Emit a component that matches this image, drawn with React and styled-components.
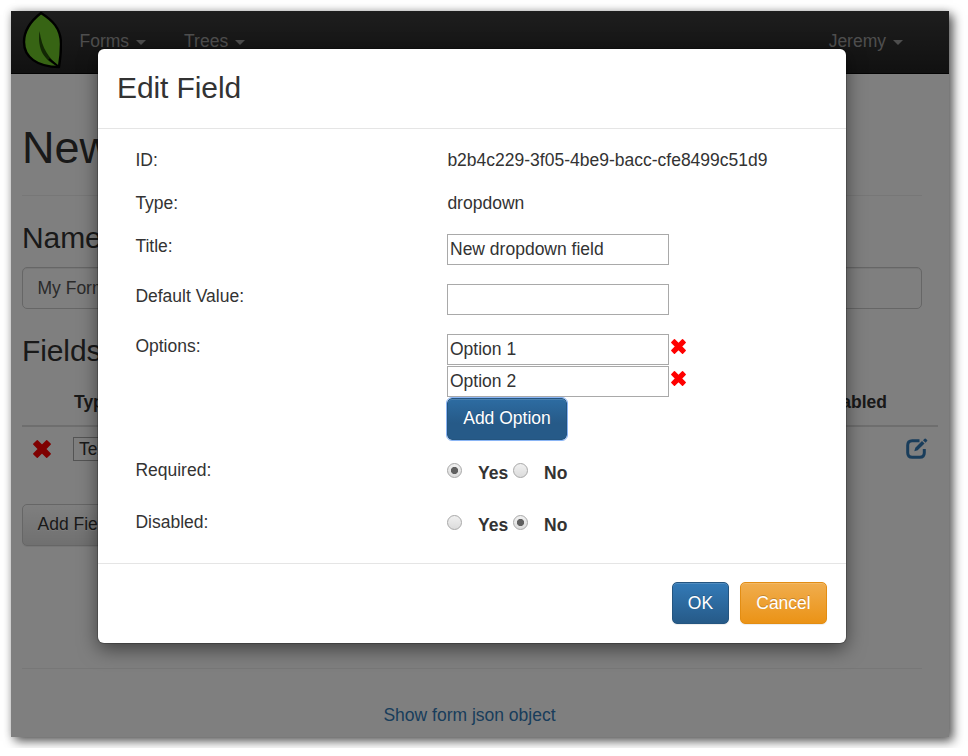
import React from 'react';
import styled, { createGlobalStyle, css } from 'styled-components';

const GlobalStyle = createGlobalStyle`
  * { box-sizing: border-box; }
  body {
    margin: 0;
    background: #fff;
    color: #333;
    font: 17.5px/25px "Liberation Sans", Arial, sans-serif;
    overflow: hidden;
  }
  h1, h3 { font-weight: 400; line-height: 1.1; margin: 0; }
  input, button { font: inherit; color: inherit; }
`;

const Window = styled.div`
  position: relative;
  width: 938px;
  height: 726px;
  margin: 11px;
  background: #fff;
  box-shadow: 4px 4px 10px rgba(0, 0, 0, 0.65), 0 0 8px rgba(0, 0, 0, 0.15);
`;

const Navbar = styled.nav`
  display: flex;
  height: 63px;
  padding: 0 46px 0 10.5px;
  background: linear-gradient(#3c3c3c, #222);
  border-bottom: 1px solid #080808;
`;

const Logo = styled.svg`
  width: 40px;
  height: 58px;
`;

const NavItem = styled.a`
  display: flex;
  align-items: center;
  gap: 7px;
  height: 60px;
  color: #9d9d9d;
  margin-left: ${(p) => (p.$end ? 'auto' : p.$gap)};
`;

const Caret = styled.span`
  margin-top: 3px;
  border: 5px solid transparent;
  border-top-color: currentColor;
  border-bottom: 0;
`;

const Page = styled.main`
  padding: 49px 0 0 11px;
`;

const PageTitle = styled.h1`
  font-size: 45px;
  height: 50px;
  white-space: nowrap;
`;

const Rule = styled.hr`
  width: 900px;
  height: 1px;
  margin: ${(p) => p.$top} 0 25px;
  border: 0;
  background: #eee;
`;

const SectionTitle = styled.h3`
  font-size: 30px;
  height: 33px;
  letter-spacing: -0.1px;
`;

const NameInput = styled.input`
  display: block;
  width: 900px;
  height: 42px;
  margin: 13px 0 25px;
  padding: 1px 14.5px 0;
  border: 1px solid #ccc;
  border-radius: 5px;
  background: #fff;
  color: #555;
  box-shadow: inset 0 1px 1px rgba(0, 0, 0, 0.075);
`;

const FieldTable = styled.div`
  width: 916px;
  margin-top: 13px;
`;

const FieldHead = styled.div`
  display: flex;
  justify-content: space-between;
  height: 47px;
  padding: 10px 51px 0 52px;
  border-bottom: 2px solid #ddd;
  font-weight: 700;
`;

const FieldRow = styled.div`
  display: flex;
  align-items: flex-start;
  height: 77px;
  padding: 10px 10px 0 11px;
`;

const FieldType = styled.div`
  width: 140px;
  height: 24px;
  margin-left: 22px;
  padding-left: 5px;
  border: 1px solid #a9a9a9;
  line-height: 22px;
`;

const RemoveIcon = styled.svg`
  width: ${(p) => p.$size};
  height: ${(p) => p.$size};
  margin-top: ${(p) => p.$top};
  flex: none;
`;

const EditIcon = styled.svg`
  width: 22px;
  height: 22px;
  margin: 1px 0 0 auto;
`;

const tones = {
  plain: css`
    color: #333;
    border-color: #ccc;
    background: linear-gradient(#fff, #e0e0e0);
    text-shadow: 0 1px 0 #fff;
  `,
  primary: css`
    color: #fff;
    border-color: #245580;
    background: linear-gradient(#337ab7, #265a88);
    text-shadow: 0 -1px 0 rgba(0, 0, 0, 0.2);
  `,
  focused: css`
    color: #fff;
    border-color: #245580;
    background: linear-gradient(#2d6ca2, #265a88 60%);
    text-shadow: 0 -1px 0 rgba(0, 0, 0, 0.2);
    outline: 1px solid #8ab5f5;
    outline-offset: -0.5px;
  `,
  warning: css`
    color: #fff;
    border-color: #e38d13;
    background: linear-gradient(#f0ad4e, #eb9316);
    text-shadow: 0 -1px 0 rgba(0, 0, 0, 0.2);
  `,
};

const Button = styled.button`
  display: block;
  width: ${(p) => p.$width};
  height: 42px;
  padding: 0 0 ${(p) => p.$lift || '2px'};
  border: 1px solid;
  border-radius: 5px;
  white-space: nowrap;
  box-shadow: inset 0 1px 0 rgba(255, 255, 255, 0.15), 0 1px 1px rgba(0, 0, 0, 0.075);
  ${(p) => tones[p.$tone]}
`;

const JsonLink = styled.a`
  display: block;
  width: 895px;
  margin-top: 34px;
  color: #337ab7;
  text-align: center;
`;

const Backdrop = styled.div`
  position: absolute;
  inset: 0;
  padding: 38px 0 0 87px;
  background: rgba(0, 0, 0, 0.5);
  overflow: hidden;
`;

const Modal = styled.section`
  width: 748px;
  height: 594px;
  border-radius: 6px;
  background: #fff;
  box-shadow: 0 6px 19px rgba(0, 0, 0, 0.5), 0 0 0 1px rgba(0, 0, 0, 0.2);
`;

const ModalHeader = styled.header`
  height: 80px;
  padding: 22px 19px;
  border-bottom: 1px solid #e5e5e5;
`;

const ModalBody = styled.div`
  display: grid;
  grid-template-rows: 43px 43px 50px 50px 124px 52px 52px;
  height: 434px;
  padding: 19px 37px 0;
`;

const FormRow = styled.div`
  display: grid;
  grid-template-columns: 312px 1fr;
  align-items: start;
`;

const Label = styled.span`
  padding-left: 0.4px;
`;

const TextInput = styled.input`
  display: block;
  width: 222px;
  height: 31px;
  padding: 0 2px 1px;
  border: 1px solid #a9a9a9;
  border-radius: 0;
  background: #fff;
`;

const OptionRow = styled.div`
  display: flex;
  gap: 2px;
  height: 32px;
`;

const RadioGroup = styled.div`
  display: flex;
  padding-top: 3px;
  font-weight: 700;
`;

const RadioLabel = styled.label`
  display: flex;
  width: 66px;
  gap: 16px;
`;

const Radio = styled.span`
  width: 15px;
  height: 15px;
  margin-top: 2px;
  border: 1px solid #a8a8a8;
  border-radius: 50%;
  background: ${(p) =>
    p.$on
      ? 'radial-gradient(circle, #606060 3.2px, transparent 4px), linear-gradient(#f0f0f0, #dcdcdc)'
      : 'linear-gradient(#f0f0f0, #dcdcdc)'};
`;

const ModalFooter = styled.footer`
  display: flex;
  justify-content: flex-end;
  gap: 11px;
  padding: 18px 19px;
  border-top: 1px solid #e5e5e5;
`;

const Leaf = () => (
  <Logo viewBox="0 0 40 58" preserveAspectRatio="none">
    <path
      d="M19 2C10 9 2 18 2 31C2 46 15 56 37 56C38 50 39 42 39 33C39 17 30 9 19 2Z"
      fill="#6ec828"
      stroke="#000"
      strokeWidth="2.4"
      strokeLinejoin="round"
    />
    <path d="M17.5 20C15 38 22 50 37 55.5C27 47 20 38 17.5 20Z" fill="#244f08" />
    <path d="M27 48L37 56" stroke="#000" strokeWidth="2" />
  </Logo>
);

const Remove = ({ size = '15px', top = '5px' }) => (
  <RemoveIcon $size={size} $top={top} viewBox="0 0 16 16">
    <path
      d="M3.7.9L8 5L12.3.9L15.1 3.7L11 8L15.1 12.3L12.3 15.1L8 11L3.7 15.1L.9 12.3L5 8L.9 3.7Z"
      fill="#f00"
      stroke="#f00"
      strokeWidth="1.6"
      strokeLinejoin="round"
    />
  </RemoveIcon>
);

const Edit = () => (
  <EditIcon viewBox="0 0 22 22" fill="none" stroke="#337ab7">
    <path d="M13.5 2.7H6.2Q1.7 2.7 1.7 7.2V14.8Q1.7 19.3 6.2 19.3H13.8Q18.3 19.3 18.3 14.8V11" strokeWidth="3" />
    <path d="M8.3 13.2L9.3 9.8L16 3.1L18.5 5.6L11.7 12.3Z" fill="#337ab7" stroke="none" />
    <path d="M17 2.3L18.6.7Q19.2.2 19.8.7L21.1 2Q21.6 2.6 21.1 3.1L19.5 4.7Z" fill="#337ab7" stroke="none" />
  </EditIcon>
);

const YesNo = ({ value }) => (
  <RadioGroup>
    {['Yes', 'No'].map((name) => (
      <RadioLabel key={name}>
        <Radio $on={value === name} />
        {name}
      </RadioLabel>
    ))}
  </RadioGroup>
);

export default function App() {
  return (
    <>
      <GlobalStyle />
      <Window>
        <Navbar>
          <Leaf />
          <NavItem $gap="18px">Forms <Caret /></NavItem>
          <NavItem $gap="38px">Trees <Caret /></NavItem>
          <NavItem $end>Jeremy <Caret /></NavItem>
        </Navbar>
        <Page>
          <PageTitle>New Form</PageTitle>
          <Rule $top="22px" />
          <SectionTitle>Name</SectionTitle>
          <NameInput defaultValue="My Form" />
          <SectionTitle>Fields</SectionTitle>
          <FieldTable>
            <FieldHead><span>Type</span><span>Disabled</span></FieldHead>
            <FieldRow>
              <Remove size="18px" top="3px" />
              <FieldType>Text</FieldType>
              <Edit />
            </FieldRow>
          </FieldTable>
          <Button $tone="plain" $width="105px">Add Field</Button>
          <Rule $top="122px" />
          <JsonLink>Show form json object</JsonLink>
        </Page>
        <Backdrop>
          <Modal>
            <ModalHeader><SectionTitle>Edit Field</SectionTitle></ModalHeader>
            <ModalBody>
              <FormRow><Label>ID:</Label><Label>b2b4c229-3f05-4be9-bacc-cfe8499c51d9</Label></FormRow>
              <FormRow><Label>Type:</Label><Label>dropdown</Label></FormRow>
              <FormRow><Label>Title:</Label><TextInput defaultValue="New dropdown field" /></FormRow>
              <FormRow><Label>Default Value:</Label><TextInput /></FormRow>
              <FormRow>
                <Label>Options:</Label>
                <div>
                  <OptionRow><TextInput defaultValue="Option 1" /><Remove /></OptionRow>
                  <OptionRow><TextInput defaultValue="Option 2" /><Remove /></OptionRow>
                  <Button $tone="focused" $width="120px">Add Option</Button>
                </div>
              </FormRow>
              <FormRow><Label>Required:</Label><YesNo value="Yes" /></FormRow>
              <FormRow><Label>Disabled:</Label><YesNo value="No" /></FormRow>
            </ModalBody>
            <ModalFooter>
              <Button $tone="primary" $width="57px" $lift="0px">OK</Button>
              <Button $tone="warning" $width="87px" $lift="0px">Cancel</Button>
            </ModalFooter>
          </Modal>
        </Backdrop>
      </Window>
    </>
  );
}
